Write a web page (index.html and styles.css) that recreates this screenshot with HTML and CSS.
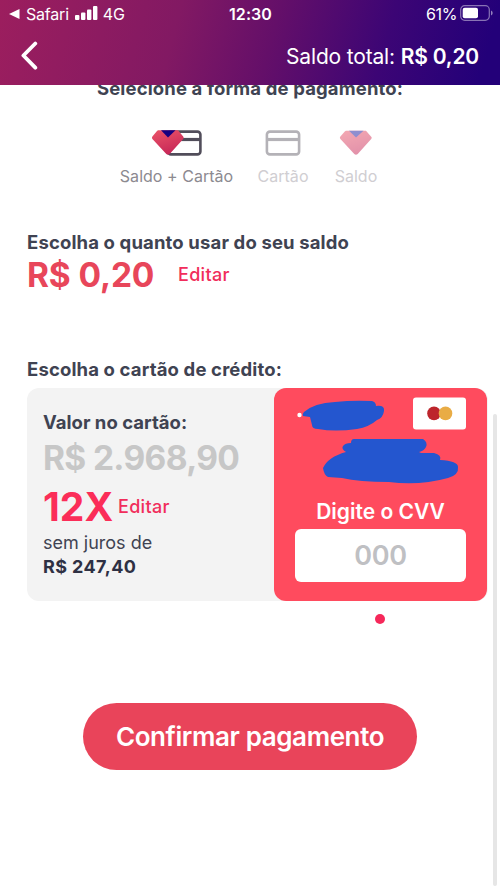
FILE: index.html
```html
<!DOCTYPE html>
<html lang="pt-BR">
<head>
<meta charset="utf-8">
<meta name="viewport" content="width=device-width">
<title>Pagamento</title>
<link rel="stylesheet" href="styles.css">
</head>
<body>
<header class="header">
  <div class="status">
    <div class="status-left">
      <svg width="11" height="10" viewBox="0 0 11 10"><path d="M0 5 10.5 0V10z" fill="#fff"/></svg>
      <span class="back-app">Safari</span>
      <svg class="signal" width="23" height="14" viewBox="0 0 23 14" fill="#fff"><rect y="9" width="4.4" height="5" rx="1"/><rect x="6" y="6.5" width="4.4" height="7.5" rx="1"/><rect x="12" y="3.5" width="4.4" height="10.5" rx="1"/><rect x="18" width="4.4" height="14" rx="1"/></svg>
      <span class="network">4G</span>
    </div>
    <span class="clock">12:30</span>
    <div class="status-right">
      <span class="percent">61%</span>
      <svg width="33" height="16" viewBox="0 0 33 16"><rect x=".7" y=".7" width="28.6" height="14.6" rx="4" fill="none" stroke="#fff" stroke-opacity=".45" stroke-width="1.2"/><rect x="2.7" y="2.7" width="15.3" height="10.6" rx="2" fill="#fff"/><path d="M31 5.4q1.7.7 1.7 2.6T31 10.6z" fill="#fff" fill-opacity=".5"/></svg>
    </div>
  </div>
  <div class="nav">
    <svg width="18" height="30" viewBox="0 0 18 30"><path d="M14.3 2.5 2.4 14.5 14.3 26.7" fill="none" stroke="#fff" stroke-width="3.8" stroke-linecap="round" stroke-linejoin="round"/></svg>
    <span class="total">Saldo total: <b>R$ 0,20</b></span>
  </div>
</header>
<main class="content">
  <h1 class="title">Selecione a forma de pagamento:</h1>
  <div class="methods">
    <div class="method method-both">
      <svg width="52" height="28" viewBox="0 0 52 28">
        <defs><linearGradient id="gem" x1="0" y1="0" x2=".4" y2="1"><stop offset="0" stop-color="#ea5468"/><stop offset="1" stop-color="#c82858"/></linearGradient></defs>
        <rect x="17" y="2.6" width="32.4" height="22.8" rx="3" fill="#fff" stroke="#514d5a" stroke-width="2.6"/><path d="M18 10.5H49" stroke="#514d5a" stroke-width="3.2"/>
        <path d="M7 1.3H27L32.2 7.6Q33.2 8.8 32.2 10L18.7 25Q17 26.6 15.3 25L1.4 10Q.4 8.8 1.4 7.6L6 2Z" fill="url(#gem)"/><path d="M10 1.3H24.5L17 8.4Z" fill="#160080"/>
      </svg>
      <span class="label">Saldo + Cartão</span>
    </div>
    <div class="method method-card">
      <svg width="36" height="28" viewBox="0 0 36 28"><rect x="1.9" y="2.6" width="32.2" height="22.8" rx="3" fill="none" stroke="#b4b2b7" stroke-width="2.6"/><path d="M2 10.5H34" stroke="#b4b2b7" stroke-width="3.2"/></svg>
      <span class="label">Cartão</span>
    </div>
    <div class="method method-balance">
      <svg class="faded" width="34" height="28" viewBox="0 0 34 28"><path d="M7 1.8H27L32.2 7.8Q33.2 8.8 32.2 10L18.7 25Q17 26.6 15.3 25L1.4 10Q.4 8.8 1.4 7.6L6 2.3Z" fill="url(#gem)"/><path d="M10 1.8H24.5L17 8.6Z" fill="#2020a0"/></svg>
      <span class="label">Saldo</span>
    </div>
  </div>
  <h2 class="heading heading-balance">Escolha o quanto usar do seu saldo</h2>
  <div class="balance"><span class="amount">R$ 0,20</span><a class="edit">Editar</a></div>
  <h2 class="heading heading-card">Escolha o cartão de crédito:</h2>
  <section class="panel">
    <div class="details">
      <div class="details-title">Valor no cartão:</div>
      <div class="value">R$ 2.968,90</div>
      <div class="installments"><span class="times">12X</span><a class="edit">Editar</a></div>
      <div class="interest">sem juros de</div>
      <div class="each">R$ 247,40</div>
    </div>
    <div class="card">
      <svg class="card-art" width="213" height="107" viewBox="0 0 213 107">
        <circle cx="25.5" cy="27" r="2.2" fill="#fff"/>
        <path d="M30 24Q40 15 61 14Q79 12 98 13Q102 14 102 18Q111 17 110 23Q109 30 103 32Q95 39 83 41Q61 44 44 41Q38 41 38 37L36 29L29 28Q28 26 30 24Z" fill="#2456cf"/>
        <path d="M80 51H149Q154 54 152 59Q150 63 145 64L147 65H160Q168 67 166 72Q184 73 184 79Q185 87 174 90Q145 98 115 94Q85 94 68 90L54 89Q50 87 49 80Q54 69 72 64Q67 61 69 58Q71 55 77 55Q77 51 80 51Z" fill="#2456cf"/>
        <rect x="139" y="9.5" width="53" height="32" rx="3" fill="#fff"/><circle cx="160" cy="25.4" r="6.8" fill="#bd252c"/><circle cx="171.5" cy="25.4" r="6.8" fill="#e9ac45"/>
      </svg>
      <div class="cvv-label">Digite o CVV</div>
      <div class="cvv">000</div>
    </div>
  </section>
  <div class="pager"></div>
  <div class="confirm"><span>Confirmar pagamento</span></div>
  <div class="scrollbar"></div>
</main>
</body>
</html>
```
FILE: styles.css
```css
* { box-sizing: border-box; }
body { margin: 0; width: 500px; height: 890px; overflow: hidden; background: #fff; font-family: Inter, "Liberation Sans", sans-serif; color: #3f4352; white-space: nowrap; }
svg { display: block; flex: none; }
h1, h2 { margin: 0; }
.header { height: 85px; color: #fff; background: linear-gradient(105deg, #9c1e5e 0%, #821963 35%, #640f69 54%, #3c0575 76%, #230079 96%); }
.status { height: 28px; display: grid; grid-template-columns: 1fr auto 1fr; align-items: center; padding: 0 8px 0 9px; font-size: 16px; line-height: 28px; }
.status-left { display: flex; align-items: center; }
.back-app { margin-left: 6px; letter-spacing: -.2px; }
.signal { margin: 0 5px 2px 6px; }
.network { letter-spacing: -.3px; }
.clock { font-weight: 600; letter-spacing: .1px; }
.status-right { display: flex; justify-content: flex-end; align-items: center; gap: 3px; }
.percent { letter-spacing: -.4px; }
.status-right svg { margin: 0 -1px 2px 0; }
.nav { height: 56px; display: flex; justify-content: space-between; align-items: center; padding: 0 21px; }
.total { font-size: 21px; letter-spacing: -.17px; }
.total b { font-weight: 600; }
.content { position: relative; height: 805px; overflow: hidden; }
.title { margin-top: -9px; text-align: center; font-size: 18.5px; line-height: 24px; font-weight: 700; letter-spacing: .13px; }
.methods { display: flex; padding: 29px 0 0 120px; height: 92px; }
.method { display: flex; flex-direction: column; align-items: center; font-size: 16px; }
.label { line-height: 22px; margin-top: 8px; letter-spacing: .03px; }
.method-both { width: 113px; color: #8c8a90; }
.method-card { width: 52px; margin-left: 24px; color: #d0ced2; }
.method-balance { width: 44px; margin-left: 25px; color: #d0ced2; }
.faded { opacity: .5; }
.heading { padding-left: 27px; font-size: 18.5px; line-height: 24px; font-weight: 700; letter-spacing: .14px; }
.heading-balance { margin-top: 38px; }
.balance { display: flex; align-items: center; height: 39px; margin-top: 1px; padding-left: 27px; }
.amount { font-size: 33.5px; font-weight: 700; color: #e8465a; width: 151px; letter-spacing: -.15px; }
.edit { font-size: 18px; font-weight: 500; color: #f12d5b; letter-spacing: .3px; }
.heading-card { margin-top: 63px; }
.panel { width: 461px; height: 213px; margin: 7px 0 0 27px; display: flex; justify-content: space-between; background: #f3f3f3; border-radius: 12px; }
.details { padding: 22px 0 0 16px; }
.details-title { font-size: 18.5px; line-height: 24px; font-weight: 700; letter-spacing: .02px; }
.value { margin-top: 1px; font-size: 33.5px; line-height: 46px; font-weight: 700; color: #c7c7c7; letter-spacing: -.65px; }
.installments { display: flex; align-items: center; height: 50px; }
.times { font-size: 39px; font-weight: 700; color: #fb2d58; width: 75px; }
.interest { font-size: 18px; line-height: 24px; }
.each { font-size: 18px; line-height: 24px; font-weight: 700; color: #2e3043; letter-spacing: .4px; }
.card { width: 213px; height: 213px; margin-right: 1px; border-radius: 12px; background: #ff4b5e; display: flex; flex-direction: column; align-items: center; }
.cvv-label { color: #fff; font-size: 21px; line-height: 32px; font-weight: 600; margin-top: 1px; }
.cvv { width: 171px; height: 53px; margin-top: 1px; border-radius: 6px; background: #fff; color: #bfc0c3; text-align: center; font-size: 27px; line-height: 54px; font-weight: 600; letter-spacing: -.3px; }
.pager { width: 10px; height: 10px; margin: 13px 0 0 375px; border-radius: 50%; background: #f6285a; }
.confirm { width: 334px; height: 67px; margin: 79px 0 0 83px; border-radius: 34px; background: #e9445a; color: #fff; text-align: center; font-size: 26px; line-height: 67px; font-weight: 600; letter-spacing: -.4px; }
.scrollbar { position: absolute; right: 3px; top: 329px; width: 4px; height: 472px; border-radius: 2px; background: #e6e6e6; }
```
